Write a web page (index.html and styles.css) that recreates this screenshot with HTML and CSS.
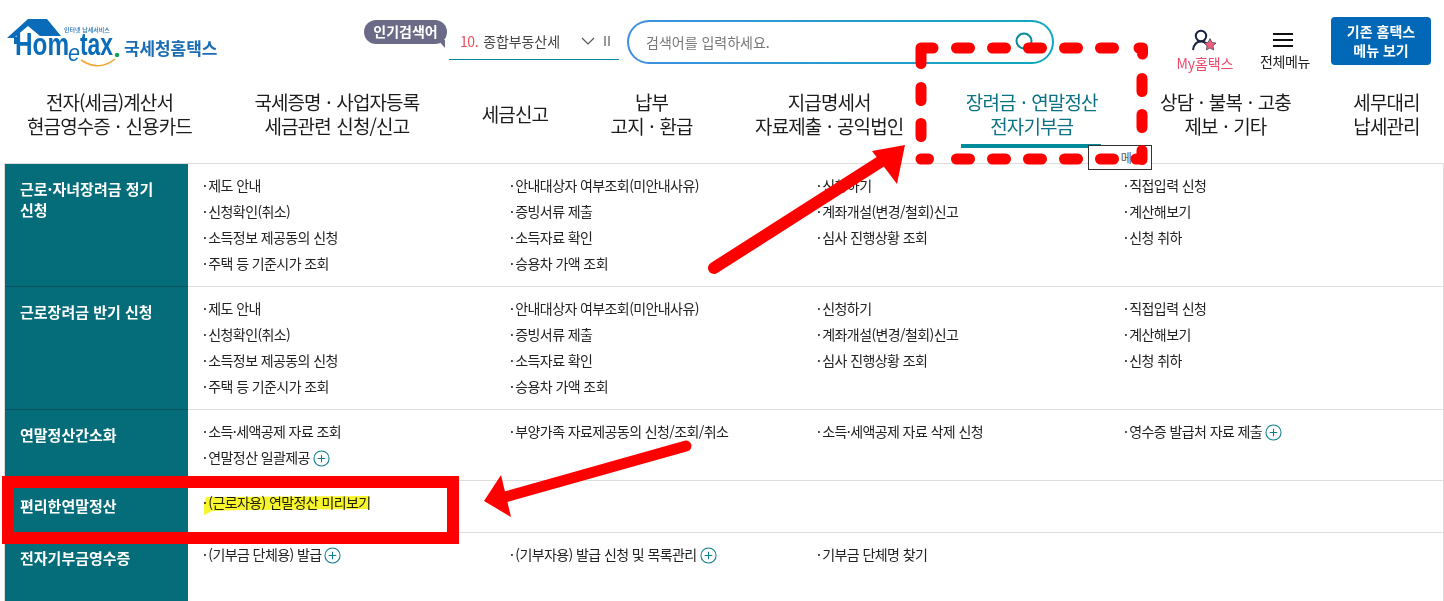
FILE: index.html
```html
<!DOCTYPE html>
<html lang="ko">
<head>
    <meta charset="UTF-8">
    <title>국세청홈택스</title>
    <link rel="stylesheet" href="styles.css">
</head>
<body>
    <div class="page">
        <header class="top">
            <a class="logo">
                <svg width="118" height="52" viewBox="0 0 118 52">
                    <path d="M0 20 L21 1 H40 L54 18 H33 L21 8 L8 19 H10 V26 H7 V20 Z" fill="#0a6cb8"/>
                    <text x="8" y="37" class="logo-word" textLength="54" lengthAdjust="spacingAndGlyphs">Hom</text>
                    <text x="61" y="43" class="logo-e" textLength="12" lengthAdjust="spacingAndGlyphs">e</text>
                    <text x="73" y="37" class="logo-word" textLength="33" lengthAdjust="spacingAndGlyphs">tax</text>
                    <circle cx="110" cy="37" r="2.2" fill="#12a150"/>
                    <path d="M74 42 Q92 54 108 41" fill="none" stroke="#f4a533" stroke-width="1.6"/>
                    <text x="57" y="14" class="logo-small">인터넷 납세서비스</text>
                </svg>
                <span class="logo-name">국세청홈택스</span>
            </a>
            <div class="popular">
                <span class="badge">인기검색어</span>
                <div class="rank">
                    <span class="rank-num">10.</span>
                    <span class="rank-text">종합부동산세</span>
                    <svg class="rank-arrow" width="14" height="8" viewBox="0 0 14 8"><path d="M1 1 L7 7 L13 1" fill="none" stroke="#555" stroke-width="1.2"/></svg>
                    <span class="rank-pause"></span>
                </div>
            </div>
            <div class="search">
                <span class="search-hint">검색어를 입력하세요.</span>
                <svg width="22" height="22" viewBox="0 0 22 22"><circle cx="10" cy="10" r="7.5" fill="none" stroke="#0a8a9a" stroke-width="2"/><path d="M15 15 L20 20" stroke="#0a8a9a" stroke-width="2.4"/></svg>
            </div>
            <div class="top-link my">
                <svg width="28" height="24" viewBox="0 0 28 24">
                    <circle cx="10" cy="7" r="5.2" fill="none" stroke="#1c2340" stroke-width="2"/>
                    <path d="M2 21 C3 14 7 12.5 10 12.5 C12 12.5 14 13 15.5 14.5" fill="none" stroke="#1c2340" stroke-width="2"/>
                    <path d="M19 9.5 L20.9 13.4 L25 14 L22 16.9 L22.7 21 L19 19 L15.3 21 L16 16.9 L13 14 L17.1 13.4 Z" fill="#ee5f7c" stroke="#1c2340" stroke-width=".6"/>
                </svg>
                <span>My홈택스</span>
            </div>
            <div class="top-link all">
                <span class="burger"></span>
                <span>전체메뉴</span>
            </div>
            <button class="old-menu">기존 홈택스<br>메뉴 보기</button>
        </header>

        <nav class="gnb">
            <a>전자(세금)계산서<br>현금영수증 · 신용카드</a>
            <a>국세증명 · 사업자등록<br>세금관련 신청/신고</a>
            <a>세금신고</a>
            <a>납부<br>고지 · 환급</a>
            <a>지급명세서<br>자료제출 · 공익법인</a>
            <a class="on">장려금 · 연말정산<br>전자기부금<span class="tip">메</span></a>
            <a>상담 · 불복 · 고충<br>제보 · 기타</a>
            <a>세무대리<br>납세관리</a>
        </nav>

        <div class="menu">
            <section class="row">
                <h3>근로·자녀장려금 정기 신청</h3>
                <ul>
                    <li>제도 안내</li>
                    <li>안내대상자 여부조회(미안내사유)</li>
                    <li>신청하기</li>
                    <li>직접입력 신청</li>
                    <li>신청확인(취소)</li>
                    <li>증빙서류 제출</li>
                    <li>계좌개설(변경/철회)신고</li>
                    <li>계산해보기</li>
                    <li>소득정보 제공동의 신청</li>
                    <li>소득자료 확인</li>
                    <li>심사 진행상황 조회</li>
                    <li>신청 취하</li>
                    <li>주택 등 기준시가 조회</li>
                    <li>승용차 가액 조회</li>
                </ul>
            </section>
            <section class="row">
                <h3>근로장려금 반기 신청</h3>
                <ul>
                    <li>제도 안내</li>
                    <li>안내대상자 여부조회(미안내사유)</li>
                    <li>신청하기</li>
                    <li>직접입력 신청</li>
                    <li>신청확인(취소)</li>
                    <li>증빙서류 제출</li>
                    <li>계좌개설(변경/철회)신고</li>
                    <li>계산해보기</li>
                    <li>소득정보 제공동의 신청</li>
                    <li>소득자료 확인</li>
                    <li>심사 진행상황 조회</li>
                    <li>신청 취하</li>
                    <li>주택 등 기준시가 조회</li>
                    <li>승용차 가액 조회</li>
                </ul>
            </section>
            <section class="row">
                <h3>연말정산간소화</h3>
                <ul>
                    <li>소득·세액공제 자료 조회</li>
                    <li>부양가족 자료제공동의 신청/조회/취소</li>
                    <li>소득·세액공제 자료 삭제 신청</li>
                    <li>영수증 발급처 자료 제출<svg class="plus" viewBox="0 0 18 18"><circle cx="9" cy="9" r="8" /><path d="M5 9 H13 M9 5 V13" /></svg></li>
                    <li>연말정산 일괄제공<svg class="plus" viewBox="0 0 18 18"><circle cx="9" cy="9" r="8" /><path d="M5 9 H13 M9 5 V13" /></svg></li>
                </ul>
            </section>
            <section class="row">
                <h3>편리한연말정산</h3>
                <ul>
                    <li>(근로자용) 연말정산 미리보기</li>
                </ul>
            </section>
            <section class="row last">
                <h3>전자기부금영수증</h3>
                <ul>
                    <li>(기부금 단체용) 발급<svg class="plus" viewBox="0 0 18 18"><circle cx="9" cy="9" r="8" /><path d="M5 9 H13 M9 5 V13" /></svg></li>
                    <li>(기부자용) 발급 신청 및 목록관리<svg class="plus" viewBox="0 0 18 18"><circle cx="9" cy="9" r="8" /><path d="M5 9 H13 M9 5 V13" /></svg></li>
                    <li>기부금 단체명 찾기</li>
                </ul>
            </section>
        </div>

        <!-- 캡처 위에 그린 표시 -->
        <svg class="marker-layer" width="1444" height="601" viewBox="0 0 1444 601">
            <path d="M204 505 L206 497 L370 496 L369 509 L240 510 L212 511 L204 515 Z" fill="#f7f52e"/>
        </svg>
        <svg class="marks" width="1444" height="601" viewBox="0 0 1444 601">
            <path class="dash" d="M921 63.5 V48 H933 M956.5 48 H969.5 M992.5 48 H1005.5 M1028.5 48 H1041.5 M1064.5 48 H1077.5 M1100.5 48 H1113.5 M1139 48 H1142.5 V54 M921 87.5 V100.5 M921 123.5 V136.5 M1142 78.5 V91.5 M1142 114.5 V127.5 M1142 150.5 V159.5 M921 159 H928.5 M956.5 159 H969.5 M992.5 159 H1005.5 M1028.5 159 H1041.5 M1064.5 159 H1077.5 M1100.5 159 H1113.5 M1136 159 H1142"/>
            <path class="line" d="M714 268 L880 162"/>
            <path class="head" d="M905 145 L872 151 L897 184 Z"/>
            <path class="line thin" d="M686 446 L505 497"/>
            <path class="head" d="M484 501 L501 475 L511 517 Z"/>
            <rect class="box" x="8" y="482" width="445" height="56"/>
        </svg>
    </div>
</body>
</html>
```

FILE: styles.css
```css
html, body {
    margin: 0;
    padding: 0;
    background-color: white;
}
body {
    font-family: "Noto Sans CJK KR", "Noto Sans", sans-serif;
    color: #222;
}
.page {
    position: relative;
    width: 1444px;
    height: 601px;
    overflow: hidden;
}

/* top bar */
.top {
    display: flex;
    height: 87px;
    box-sizing: border-box;
    padding-top: 17px;
}
.logo {
    display: flex;
    width: 357px;
    padding-left: 7px;
    box-sizing: border-box;
    height: 52px;
    align-items: center;
}
.logo svg {
    flex: none;
    margin-top: 2px;
}
.logo-word {
    font-family: "Liberation Sans", sans-serif;
    font-size: 31px;
    font-weight: bold;
    fill: #0a6cb8;
}
.logo-e {
    font-family: "Liberation Sans", sans-serif;
    font-size: 24px;
    font-style: italic;
    fill: #0a6cb8;
}
.logo-small {
    font-size: 6px;
    font-weight: 500;
    fill: #1a6db5;
}
.logo-name {
    margin-left: -1px;
    margin-top: 9px;
    font-size: 17px;
    font-weight: 700;
    letter-spacing: -.1px;
    color: #1a6db5;
    white-space: nowrap;
}
.popular {
    display: flex;
    width: 270px;
    padding-left: 7px;
    box-sizing: border-box;
}
.badge {
    position: relative;
    flex: none;
    width: 83px;
    height: 24px;
    margin-top: 3px;
    background-color: #6b6b88;
    border-radius: 12px;
    color: white;
    font-size: 14px;
    font-weight: 700;
    line-height: 23px;
    text-align: center;
}
.badge::after {
    content: "";
    position: absolute;
    right: 2px;
    bottom: -4px;
    border-top: 8px solid #6b6b88;
    border-left: 7px solid transparent;
}
.rank {
    display: flex;
    align-items: center;
    width: 170px;
    height: 43px;
    margin-left: 2px;
    box-sizing: border-box;
    padding: 5px 0 0 11px;
    border-bottom: 1px solid #008c9a;
    font-size: 14px;
    white-space: nowrap;
}
.rank-num {
    color: #e9505a;
    margin-right: 5px;
    letter-spacing: -.4px;
}
.rank-text {
    color: #444;
    letter-spacing: -.1px;
}
.rank-arrow {
    margin-left: 21px;
}
.rank-pause {
    width: 2px;
    height: 10px;
    margin-left: 9px;
    border-left: 2px solid #999;
    border-right: 2px solid #999;
}
.search {
    display: flex;
    align-items: center;
    justify-content: space-between;
    width: 427px;
    height: 44px;
    margin-top: 3px;
    padding: 0 16px 0 17px;
    box-sizing: border-box;
    border: 2px solid transparent;
    border-radius: 22px;
    background: linear-gradient(white, white) padding-box, linear-gradient(90deg, #3f8fe0, #0fa8bd) border-box;
}
.search-hint {
    font-size: 14px;
    color: #777;
}
.top-link {
    display: flex;
    flex-direction: column;
    align-items: center;
    font-size: 14px;
    letter-spacing: -.4px;
    white-space: nowrap;
}
.my {
    width: 60px;
    margin-left: 121px;
    margin-top: 12px;
    color: #ec4a6a;
    letter-spacing: -.1px;
}
.all {
    width: 52px;
    margin-left: 24px;
    margin-top: 16px;
}
.burger {
    width: 20px;
    height: 14px;
    margin: 0 4px 4px 0;
    border-top: 2px solid #111;
    border-bottom: 2px solid #111;
    box-sizing: border-box;
    background: linear-gradient(#111, #111) center / 100% 2px no-repeat;
}
.old-menu {
    width: 100px;
    height: 48px;
    margin-left: 20px;
    padding: 0;
    border: none;
    border-radius: 4px;
    background-color: #0068b7;
    color: white;
    font-family: inherit;
    font-size: 14px;
    font-weight: 700;
    line-height: 19px;
}

/* main nav */
.gnb {
    display: flex;
    align-items: center;
    gap: 62.5px;
    height: 54px;
    padding-left: 27px;
    font-size: 19px;
    line-height: 24px;
    letter-spacing: -.9px;
    word-spacing: 1.2px;
    text-align: center;
    white-space: nowrap;
    color: #1c1c1c;
}
.gnb a {
    flex: none;
    position: relative;
}
.gnb .on {
    color: #0b7285;
}
.gnb .on::after {
    content: "";
    position: absolute;
    left: -5px;
    right: -3px;
    top: 54px;
    height: 4px;
    background-color: #008c9a;
}
.tip {
    position: absolute;
    left: 122px;
    top: 55px;
    width: 42px;
    height: 23px;
    padding-right: 20px;
    background-color: white;
    border: 1px solid #333;
    color: #555;
    font-size: 12px;
    line-height: 23px;
    text-align: right;
    z-index: 1;
}

/* menu table */
.menu {
    margin: 22px 0 0 4px;
    border-top: 1px solid #ddd;
    border-left: 1px solid #ddd;
    border-right: 1px solid #ddd;
}
.row {
    display: flex;
    min-height: 51px;
    border-bottom: 1px solid #ddd;
}
.row.last {
    border-bottom: none;
    height: 68px;
}
.row h3 {
    flex: none;
    width: 138px;
    margin: 0 0 -1px;
    padding: 14px 30px 0 15px;
    border-bottom: 1px solid #04545f;
    background-color: #056c7a;
    color: white;
    font-size: 15px;
    font-weight: 700;
    line-height: 21px;
}
.row ul {
    display: grid;
    grid-template-columns: repeat(4, 307px);
    grid-auto-rows: 26px;
    margin: 0;
    padding: 8px 0 10px 15px;
    list-style: none;
    font-size: 14px;
    letter-spacing: -.6px;
    line-height: 26px;
    color: #222;
}
.row li {
    display: flex;
    align-items: center;
    white-space: nowrap;
}
.row li::before {
    content: "·";
    margin-right: 2px;
}
.plus {
    width: 17px;
    height: 17px;
    margin-left: 3px;
    margin-top: 2px;
    fill: none;
    stroke: #0b7d8a;
    stroke-width: 1.1;
}

/* red marks */
.marker-layer {
    position: absolute;
    left: 0;
    top: 0;
    mix-blend-mode: multiply;
    pointer-events: none;
}
.marks {
    position: absolute;
    left: 0;
    top: 0;
    pointer-events: none;
    z-index: 2;
}
.dash {
    fill: none;
    stroke: #ff0000;
    stroke-width: 11;
    stroke-linecap: round;
    stroke-linejoin: round;
}
.line {
    fill: none;
    stroke: #ff0000;
    stroke-width: 12;
    stroke-linecap: round;
}
.line.thin {
    stroke-width: 11;
}
.head {
    fill: #ff0000;
}
.box {
    fill: none;
    stroke: #ff0000;
    stroke-width: 12;
}
```
